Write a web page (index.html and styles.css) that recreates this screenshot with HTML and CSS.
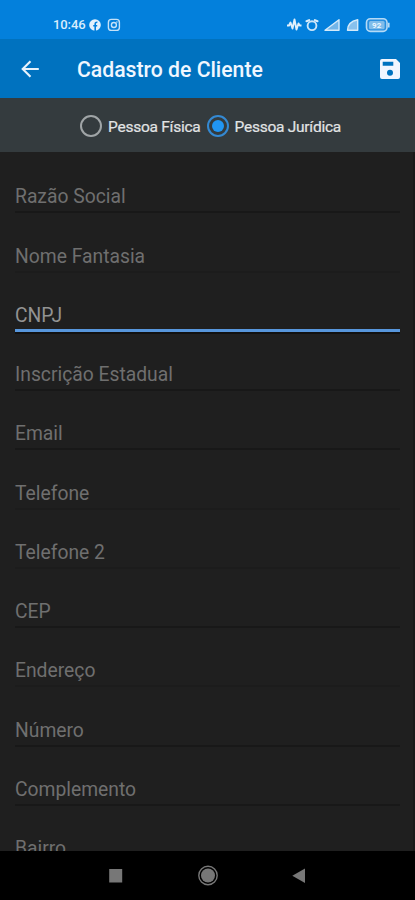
FILE: index.html
```html
<!DOCTYPE html>
<html lang="pt-BR">
<head>
<meta charset="utf-8">
<title>Cadastro de Cliente</title>
<link rel="stylesheet" href="styles.css">
</head>
<body>
<div class="screen">
  <div class="status">
    <span class="time">10:46</span>
    <svg class="social" width="34" height="14" viewBox="0 0 34 14">
      <circle cx="7" cy="7" r="5.8" fill="#e3f1fc"/>
      <path d="M7.2 13V6.1q0-2 2.2-1.8M5.2 7.8h4" fill="none" stroke="#0380dc" stroke-width="1.6"/>
      <rect x="20.4" y="1.4" width="11" height="11" rx="3" fill="none" stroke="#c5e1f8" stroke-width="1.4"/>
      <circle cx="25.9" cy="7" r="2.5" fill="none" stroke="#c5e1f8" stroke-width="1.4"/>
      <circle cx="28.9" cy="4" r=".8" fill="#c5e1f8"/>
    </svg>
    <svg class="signals" width="106" height="18" viewBox="0 0 106 18">
      <path d="M0 9.5h2l1.5-3 2 6 2-9 2 10 2-6 1.2 2H14.5" fill="none" stroke="#e0effb" stroke-width="1.9" stroke-linejoin="round"/>
      <circle cx="25" cy="9.7" r="4.4" fill="none" stroke="#cbe5f9" stroke-width="1.9"/>
      <path d="M19.5 5.2l2.6-1M30.5 5.2l-2.6-1" stroke="#d9edfc" stroke-width="2.2" stroke-linecap="round"/>
      <path d="M38 14.3L52 3.7v10.6z" fill="#71b5e9" stroke="#d4eafa" stroke-width="1.4" stroke-linejoin="round"/>
      <path d="M60.5 14.3q0-8.5 10.2-10.6v10.6z" fill="#88c1ed" stroke="#d4eafa" stroke-width="1.4" stroke-linejoin="round"/>
      <rect x="79.5" y="2.8" width="20.5" height="12.6" rx="3.8" fill="#298fdf" stroke="#b5daf6" stroke-width="1.6"/>
      <rect x="82" y="5" width="15.6" height="8.2" rx="1.5" fill="#80bdea"/>
      <path d="M101.8 6.7v4.8" stroke="#b5daf6" stroke-width="1.6"/>
      <text x="89.7" y="12.2" text-anchor="middle" class="battery">92</text>
    </svg>
  </div>
  <header class="appbar">
    <svg class="back" width="20" height="20" viewBox="0 0 20 20"><path d="M18.8 10H3M10.5 2.2L2.7 10l7.8 7.8" fill="none" stroke="#e8f3fc" stroke-width="2.1"/></svg>
    <h1>Cadastro de Cliente</h1>
    <svg class="save" width="20" height="20" viewBox="0 0 20 20"><path fill="#f2f6ff" fill-rule="evenodd" d="M2 0h14l4 4v14a2 2 0 0 1-2 2H2a2 2 0 0 1-2-2V2a2 2 0 0 1 2-2zM2.7 2.8v4h10.6v-4zM10 10.7a3 3 0 1 0 0 6 3 3 0 0 0 0-6z"/></svg>
  </header>
  <div class="choices">
    <span class="radio"></span><span class="choice first">Pessoa Física</span>
    <span class="radio on"></span><span class="choice second">Pessoa Jurídica</span>
  </div>
  <main class="form">
    <div class="field"><span>Razão Social</span></div>
    <div class="field faint"><span>Nome Fantasia</span></div>
    <div class="field focus"><span>CNPJ</span></div>
    <div class="field"><span>Inscrição Estadual</span></div>
    <div class="field"><span>Email</span></div>
    <div class="field faint"><span>Telefone</span></div>
    <div class="field faint"><span>Telefone 2</span></div>
    <div class="field"><span>CEP</span></div>
    <div class="field faint"><span>Endereço</span></div>
    <div class="field"><span>Número</span></div>
    <div class="field"><span>Complemento</span></div>
    <div class="field"><span>Bairro</span></div>
  </main>
  <nav class="nav">
    <svg width="415" height="49" viewBox="0 0 415 49">
      <rect x="109.2" y="18" width="13" height="13.5" fill="#777"/>
      <circle cx="208" cy="24.5" r="9.2" fill="none" stroke="#777" stroke-width="1.4"/>
      <circle cx="208" cy="24.5" r="7" fill="#777"/>
      <path d="M292.3 24.7L305 17.5V32z" fill="#777"/>
    </svg>
  </nav>
</div>
</body>
</html>
```
FILE: styles.css
```css
* { box-sizing: border-box; }
body { margin: 0; background: #000; font-family: Roboto, "Liberation Sans", sans-serif; }
.screen { width: 415px; height: 900px; display: flex; flex-direction: column; overflow: hidden; }
.status { height: 39px; flex: none; display: flex; align-items: center; padding: 10px 22px 0 53px; background: #0380dc; }
.time { width: 34px; font-size: 13px; font-weight: 500; color: #d9edfc; white-space: nowrap; letter-spacing: -.1px; }
.social { margin-left: 1px; }
.signals { margin-left: auto; }
.battery { font-size: 8px; font-weight: 700; fill: #e9f6ff; }
.appbar { height: 59px; flex: none; display: flex; align-items: center; padding: 0 15px 0 20px; background: #0072bf; }
.appbar h1 { margin: 0 0 0 37px; font-size: 21.2px; font-weight: 500; line-height: 30px; color: #f0f7ff; white-space: nowrap; padding-top: 2px; }
.save { margin-left: auto; }
.choices { height: 53.5px; flex: none; display: flex; align-items: center; padding: 2px 0 0 80px; background: #343b3e; }
.radio { width: 22px; height: 22px; flex: none; display: grid; place-items: center; border: 2px solid #a0a5a7; border-radius: 50%; }
.radio.on { border-color: #3489d2; }
.radio.on::after { content: ""; width: 12px; height: 12px; border-radius: 50%; background: #2196f3; }
.choice { font-size: 15.5px; letter-spacing: -.25px; line-height: 20px; color: #e2e4e5; -webkit-text-stroke: .2px #e2e4e5; white-space: nowrap; padding-top: 2px; }
.first { width: 105px; padding-left: 6px; }
.second { padding-left: 5.5px; }
.form { flex: 1; min-height: 0; overflow: hidden; padding: 2.5px 13px 0 15px; background: #1f1f1f; border-right: 2px solid #191919; }
.field { height: 59.25px; display: flex; align-items: flex-end; padding-bottom: 3px; border-bottom: 2px solid #181818; font-size: 19.3px; line-height: 22px; color: #6f6f6f; }
.faint { border-bottom-color: #1c1c1c; }
.focus { color: #929292; border-bottom: 3px solid #5796dc; box-shadow: 0 2px #111; padding-bottom: 2px; }
.nav { height: 49px; flex: none; background: #000; }
.nav svg { display: block; }
```
